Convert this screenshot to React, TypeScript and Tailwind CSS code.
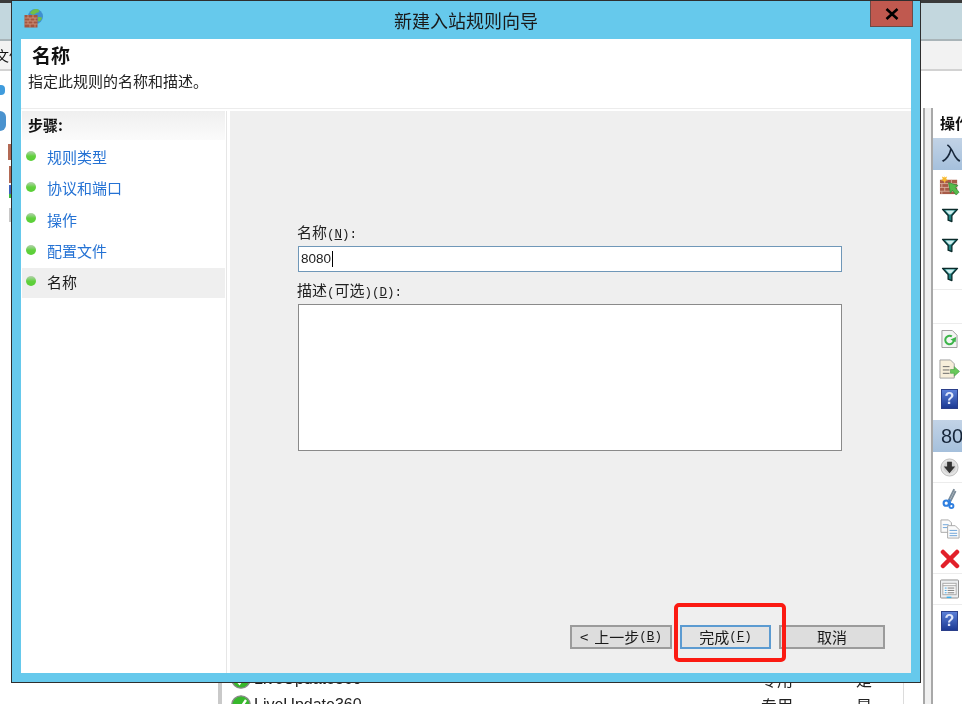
import React from "react";

const Mono = ({ children }: { children: React.ReactNode }) => (
  <span className="font-['Liberation_Mono','Noto_Sans_CJK_SC',monospace] text-[12.5px]">{children}</span>
);

const Bricks = ({ className = "" }: { className?: string }) => (
  <svg viewBox="0 0 20 19" className={className}>
    <circle cx="11.500" cy="7.500" r="7.500" fill="#3f8fd0" />
    <path d="M6 4c2-4 7-5 9-3 1 2-1 3-3 3-1 2-3 2-5 1z" fill="#6fbf4a" />
    <path d="M14 8c2 0 4 0 4 1-1 3-3 4-4 3z" fill="#6fbf4a" />
    <rect x="0.500" y="6" width="13" height="12.500" fill="#a5553f" />
    <path d="M0.500 9h13M0.500 12h13M0.500 15h13M4 6v3M9 6v3M6 9v3M11 9v3M4 12v3M9 12v3M6 15v3.500M11 15v3.500" stroke="#d09a84" strokeWidth="0.8" />
  </svg>
);

const NewRule = () => (
  <svg viewBox="0 0 22 22" className="h-[21px] w-[21px]">
    <rect x="1" y="5" width="18" height="15" fill="#a85b48" />
    <path d="M1 9h18M1 13h18M1 17h18M6 5v4M13 5v4M3 9v4M10 9v4M6 13v4M13 13v4M3 17v3" stroke="#dcb3a3" strokeWidth="0.9" />
    <path d="M5 0l1 2.500 2.500-.8-1 2.400 2 1.400-2.500.6L6 8.500 4.500 6 2 5.500l2-1.400-1-2.400 2.500.8z" fill="#f7b92e" />
    <path d="M10 8l10 3-3 2 4 5-3 3-4-5-2 3z" fill="#55bb4a" stroke="#2f8a3a" strokeWidth="0.7" />
  </svg>
);

const Funnel = () => (
  <svg viewBox="0 0 18 16" className="h-[15px] w-[18px]">
    <path d="M1 1.500h16l-6 6.500v6.500l-4-1.500V8z" fill="#1f8080" stroke="#0a2a2a" strokeWidth="1.400" strokeLinejoin="round" />
    <path d="M4 2.600h10l-4 4.200H8z" fill="#d2f0f0" />
  </svg>
);

const Refresh = () => (
  <svg viewBox="0 0 18 20" className="h-[20px] w-[17px]">
    <path d="M1 1h11l5 5v13H1z" fill="#f4f4f4" stroke="#9a9a9a" />
    <path d="M13.500 11a4.500 4.500 0 1 1-2-3.700" fill="none" stroke="#3db54a" strokeWidth="2.200" />
    <path d="M10 10.500l5.500 3 .5-5.500z" fill="#3db54a" />
  </svg>
);

const Export = () => (
  <svg viewBox="0 0 22 22" className="h-[21px] w-[21px]">
    <path d="M1 1h11l4 4v15H1z" fill="#f7eeda" stroke="#a0a0a0" />
    <path d="M4 8h7M4 11.500h7M4 15h7" stroke="#666" strokeWidth="1" />
    <path d="M12 11h4V8l5.500 5-5.500 5v-3h-4z" fill="#68c95a" stroke="#3f9a3d" strokeWidth="0.6" />
  </svg>
);

const Help = () => (
  <div className="flex h-[20px] w-[17px] items-center justify-center border border-[#2b3f8a] bg-gradient-to-b from-[#5b7fd8] to-[#1d3a94] font-['Liberation_Sans',sans-serif] text-[16px] font-bold leading-none text-[#dfe7fb]">
    ?
  </div>
);

const DownCircle = () => (
  <svg viewBox="0 0 20 20" className="h-[19px] w-[19px]">
    <circle cx="10" cy="10" r="9" fill="#e4e4e4" stroke="#bcbcbc" />
    <circle cx="10" cy="10" r="6.500" fill="#d2d2d2" />
    <path d="M7.500 4h5v5H16l-6 7-6-7h3.500z" fill="#333" />
  </svg>
);

const Scissors = () => (
  <svg viewBox="0 0 16 22" className="h-[21px] w-[15px]">
    <path d="M13 1L7 13M14.500 3L9 14" stroke="#7c8c99" strokeWidth="2" />
    <path d="M8 12l1 6" stroke="#2f7fe0" strokeWidth="2" />
    <circle cx="4.500" cy="16" r="2.800" fill="none" stroke="#2f7fe0" strokeWidth="2.200" />
    <circle cx="10" cy="19" r="2.200" fill="none" stroke="#2f7fe0" strokeWidth="2" />
  </svg>
);

const Copy = () => (
  <svg viewBox="0 0 21 21" className="h-[20px] w-[20px]">
    <path d="M1 1h8l3 3v10H1z" fill="#fafafa" stroke="#a8a8a8" />
    <path d="M3 6h6M3 9h6" stroke="#6aa2d8" />
    <path d="M8 7h8l4 4v9H8z" fill="#fafafa" stroke="#a8a8a8" />
    <path d="M10 12h8M10 15h8M10 17.500h8" stroke="#6aa2d8" />
  </svg>
);

const RedX = () => (
  <svg viewBox="0 0 20 20" className="h-[20px] w-[20px]">
    <path d="M3 3l14 14M17 3L3 17" stroke="#e2202a" strokeWidth="4.500" strokeLinecap="round" />
  </svg>
);

const Props = () => (
  <svg viewBox="0 0 20 20" className="h-[20px] w-[19px]">
    <rect x="0.500" y="0.500" width="19" height="19" rx="1" fill="#eceef0" stroke="#8d8d8d" />
    <rect x="3" y="4" width="14" height="12" fill="#fafafa" stroke="#a8a8a8" />
    <path d="M3 6.500h14" stroke="#a8a8a8" />
    <path d="M5 9h2M5 11.500h2M5 14h2" stroke="#3aa0e0" />
    <path d="M8 9h7M8 11.500h7M8 14h7" stroke="#777" />
    <rect x="7" y="18" width="5" height="1.500" fill="#3ab0ea" />
  </svg>
);

const Check = () => (
  <svg viewBox="0 0 20 20" className="h-[20px] w-[20px] shrink-0">
    <circle cx="10" cy="10" r="9.200" fill="#37b82c" stroke="#8a8a8a" strokeWidth="1.300" />
    <path d="M5 10.500l3.500 4L15 5" fill="none" stroke="#fff" strokeWidth="2.400" />
  </svg>
);

const Dot = () => (
  <span className="mt-[-3px] h-[10px] w-[10px] shrink-0 rounded-full bg-gradient-to-b from-[#b4d0ac] via-[#62d03e] to-[#58cf36]" />
);

const ActionRow = ({ children, line = false, tall = false }: { children: React.ReactNode; line?: boolean; tall?: boolean }) => (
  <div className={`flex items-center pl-[6px] ${tall ? "h-[31px]" : "h-[30px]"} ${line ? "border-b border-[#ececec]" : ""}`}>
    <div className="flex w-[21px] justify-center">{children}</div>
  </div>
);

const ActionHead = ({ text }: { text: string }) => (
  <div className="flex h-[32px] items-center overflow-hidden whitespace-nowrap bg-gradient-to-b from-[#c2d3e6] to-[#a5c0dc] pl-[8px] font-['Liberation_Sans','Noto_Sans_CJK_SC',sans-serif] text-[20px] text-[#16263a]">
    {text}
  </div>
);

const Step = ({ text, current = false }: { text: string; current?: boolean }) => (
  <div
    className={`mx-px mb-[1.400px] flex h-[30px] items-center gap-[11px] pl-[4px] text-[15px] ${
      current ? "bg-[#efefef] text-[#1a1a1a]" : "text-[#2472d4]"
    }`}
  >
    <Dot />
    <span>{text}</span>
  </div>
);

const ListRow = () => (
  <div className="flex h-[26px] shrink-0 items-center pl-[9px] text-[16px] text-[#222]">
    <Check />
    <span className="ml-[3px] w-[507px] font-['Liberation_Sans',sans-serif]">LiveUpdate360</span>
    <span className="w-[95px]">专用</span>
    <span>是</span>
  </div>
);

export default function App() {
  return (
    <div className="relative flex h-[704px] w-[962px] flex-col overflow-hidden bg-white font-['Noto_Sans_CJK_SC',sans-serif] text-[#111] blur-[0.3px]">
      {/* window behind */}
      <div className="h-[3px] shrink-0 bg-[#3a3a3a]" />
      <div className="h-[38px] shrink-0 border-b-2 border-[#a9b4b8] bg-[#c3d7de]" />
      <div className="flex h-[30px] shrink-0 items-center overflow-hidden border-b-2 border-[#d2d2d2] bg-[#f2f2f2] text-[14px]">
        <span className="ml-[-5px]">文件</span>
      </div>
      <div className="flex h-[37px] shrink-0 items-center bg-white">
        <span className="ml-[-6px] h-[10px] w-[11px] rounded-sm bg-[#3f9bdc]" />
      </div>
      <div className="flex min-h-0 flex-1">
        {/* tree */}
        <div className="flex w-[218px] shrink-0 flex-col bg-white">
          <span className="ml-[-6px] mt-[3px] h-[20px] w-[12px] rounded-full bg-[#4a93cf]" />
          <span className="ml-[8px] mt-[13px] h-[16px] w-[6px] bg-[#b36a55]" />
          <span className="ml-[9px] mt-[6px] h-[17px] w-[6px] bg-[#b36a55]" />
          <span className="ml-[9px] mt-[2px] h-[9px] w-[6px] bg-[#3d64c0]" />
          <span className="ml-[9px] h-[4px] w-[4px] bg-[#3dbb3d]" />
          <span className="ml-[9px] mt-[10px] h-[14px] w-[5px] bg-[#c8c8c8]" />
        </div>
        {/* list */}
        <div className="flex min-w-0 flex-1 border-l-[4px] border-[#c9c9c9]">
          <div className="flex w-[682px] shrink-0 flex-col justify-end overflow-hidden border-r border-[#dcdcdc]">
            <div className="mb-[-14px] flex flex-col">
              <ListRow />
              <ListRow />
            </div>
          </div>
          <div className="flex w-[29px] shrink-0 justify-end">
            <div className="h-full w-[10px] border-x-2 border-[#a8a8a8] bg-[#f0f0f0]" />
          </div>
        </div>
        {/* actions */}
        <div className="flex w-[29px] shrink-0 flex-col overflow-hidden pt-[4px]">
          <div className="flex h-[23px] w-[60px] items-center pl-[7px] text-[15px] font-bold">操作</div>
          <div className="mt-[3px] w-[60px]">
            <ActionHead text="入站规则" />
            <ActionRow><NewRule /></ActionRow>
            <ActionRow><Funnel /></ActionRow>
            <ActionRow><Funnel /></ActionRow>
            <ActionRow line><Funnel /></ActionRow>
            <div className="h-[34px] border-b border-[#ececec]" />
            <ActionRow><Refresh /></ActionRow>
            <ActionRow><Export /></ActionRow>
            <ActionRow><Help /></ActionRow>
            <div className="h-[6px]" />
            <ActionHead text="8080" />
            <ActionRow line tall><DownCircle /></ActionRow>
            <ActionRow tall><Scissors /></ActionRow>
            <ActionRow><Copy /></ActionRow>
            <ActionRow line><RedX /></ActionRow>
            <ActionRow line tall><Props /></ActionRow>
            <ActionRow tall><Help /></ActionRow>
          </div>
        </div>
      </div>

      {/* dialog */}
      <div className="absolute left-[11px] top-0 flex h-[683px] w-[910px] flex-col border border-[#2e2e2e] bg-[#66c9ec]">
        <div className="grid h-[38px] shrink-0 grid-cols-[1fr_auto_1fr]">
          <div className="pl-[12px] pt-[8px]">
            <Bricks className="h-[19px] w-[20px]" />
          </div>
          <div className="pt-[7px] text-[18px] leading-[24px] text-[#1a1a1a]">新建入站规则向导</div>
          <div className="flex justify-end pr-[7px]">
            <div className="flex h-[26px] w-[43px] items-center justify-center border border-t-0 border-[#6e4a46] bg-[#c0594f]">
              <svg viewBox="0 0 14 12" className="h-[12px] w-[14px]">
                <path d="M1.500 1l11 10M12.500 1l-11 10" stroke="#000" strokeWidth="2.600" />
              </svg>
            </div>
          </div>
        </div>
        <div className="mx-[9px] mb-[9px] flex min-h-0 flex-1 flex-col bg-white">
          <div className="h-[70px] shrink-0 border-b border-[#ececec] pl-[7px]">
            <div className="pl-[4px] pt-[3px] text-[19px] font-bold leading-[26px]">名称</div>
            <div className="mt-[2px] text-[15px] leading-[22px] text-[#222]">指定此规则的名称和描述。</div>
          </div>
          <div className="flex min-h-0 flex-1 pt-[2px]">
            <div className="w-[206px] shrink-0 border-r border-[#e6e6e6]">
              <div className="mx-px mb-[2px] flex h-[29px] items-center bg-gradient-to-b from-[#efefef] to-[#fbfbfb] pl-[6px] text-[15px] font-bold">步骤:</div>
              <Step text="规则类型" />
              <Step text="协议和端口" />
              <Step text="操作" />
              <Step text="配置文件" />
              <Step text="名称" current />
            </div>
            <div className="ml-[3px] flex min-w-0 flex-1 flex-col bg-[#efefef] pb-[24px]">
              <div className="flex flex-1 flex-col pl-[68px] pr-[69px] pt-[110px] text-[15px] text-[#222]">
                <div className="ml-[-1px] h-[25px] leading-[22px]">名称<Mono>(<span className="underline">N</span>):</Mono></div>
                <div className="flex h-[26px] items-center border border-[#6f97b8] bg-white pl-[2px] font-['Liberation_Sans',sans-serif] text-[13.500px]">
                  8080<span className="ml-px h-[16px] w-px bg-black" />
                </div>
                <div className="ml-[-1px] mt-[6px] h-[26px] leading-[24px]">描述<Mono>(</Mono>可选<Mono>)(<span className="underline">D</span>):</Mono></div>
                <div className="h-[147px] border border-[#8a8a8a] bg-white" />
              </div>
              <div className="flex justify-end gap-[8px] pr-[26px] text-[15px] text-[#1a1a1a]">
                <div className="flex h-[24px] w-[102px] items-center justify-start border-2 border-[#9b9b9b] bg-[#dddddd] pl-[8px]"><span className="mr-[6px]">&lt;</span>上一步<Mono>(<span className="underline">B</span>)</Mono></div>
                <div className="flex h-[24px] w-[91px] items-center justify-center border-2 border-[#5c9bd1] bg-[#e3e3e3]">完成<Mono>(<span className="underline">F</span>)</Mono></div>
                <div className="flex h-[24px] w-[106px] items-center justify-center border-2 border-[#9b9b9b] bg-[#dddddd]">取消</div>
              </div>
            </div>
          </div>
        </div>
      </div>

      {/* annotation */}
      <div className="absolute left-[674px] top-[603px] h-[59px] w-[112px] rounded-[5px] border-[4px] border-[#fb1a12]" />
    </div>
  );
}
